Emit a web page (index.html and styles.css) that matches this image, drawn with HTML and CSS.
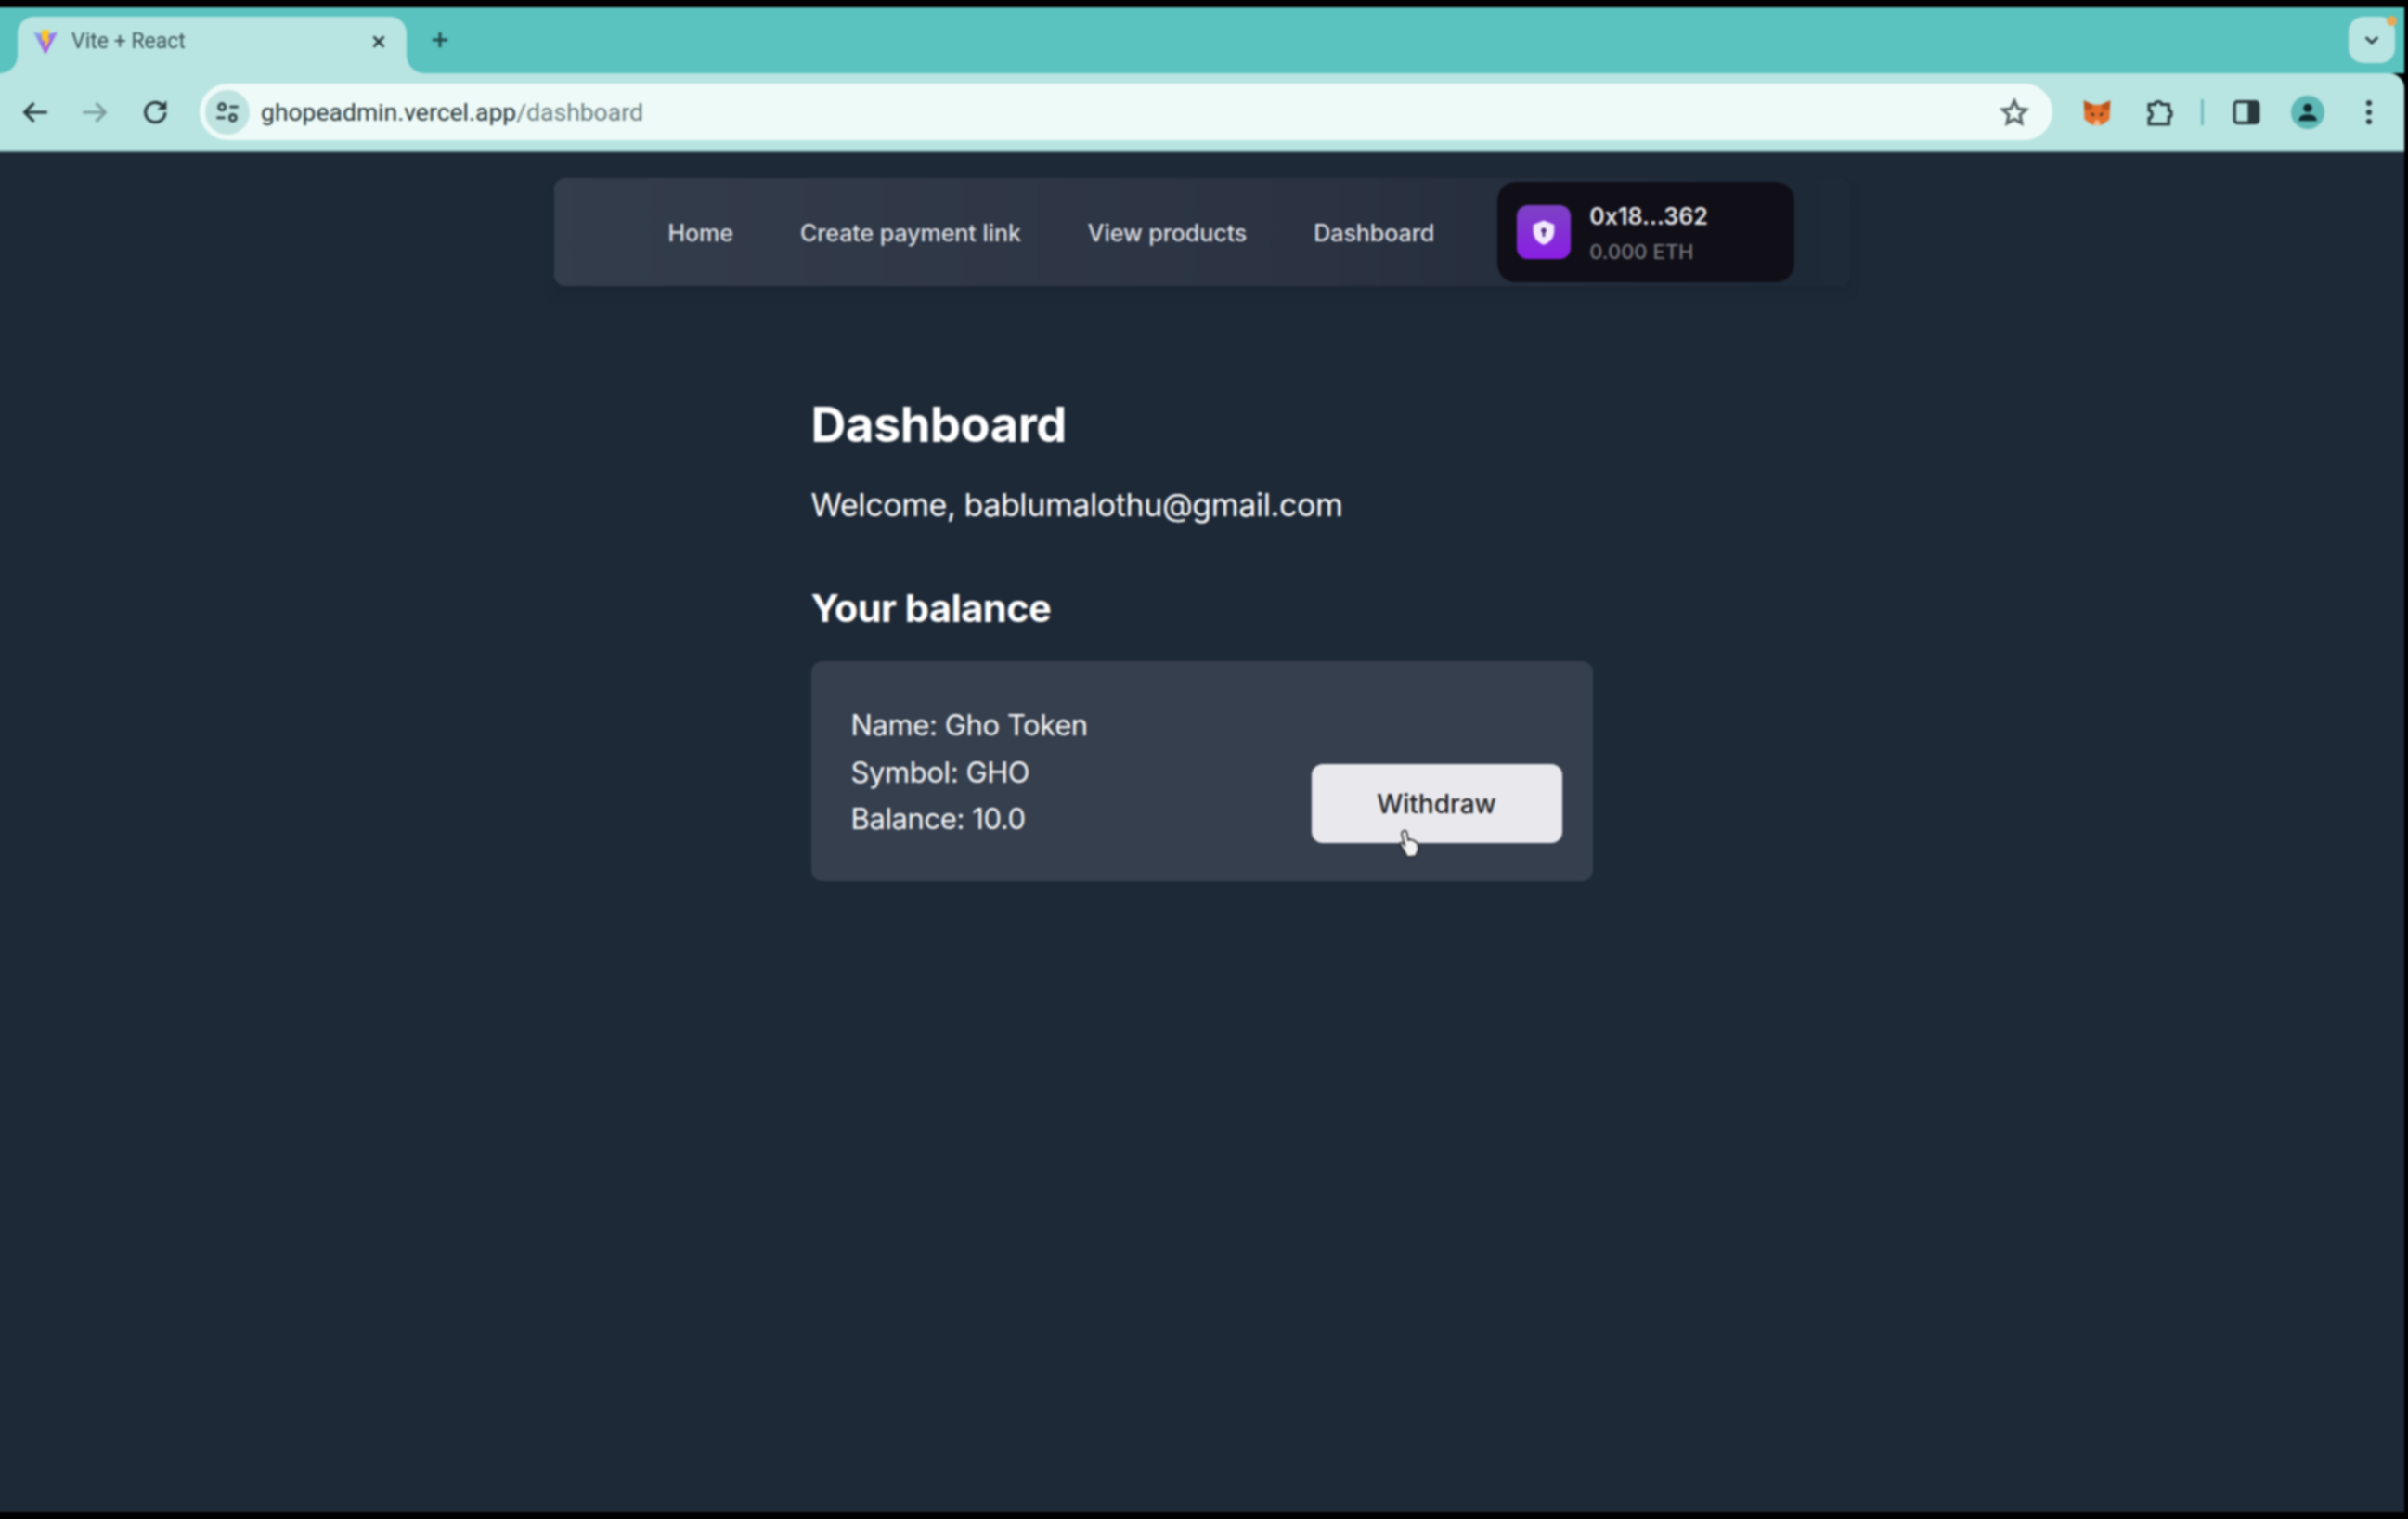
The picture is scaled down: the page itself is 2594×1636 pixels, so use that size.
FILE: index.html
```html
<!DOCTYPE html>
<html lang="en">
<head>
    <meta charset="UTF-8">
    <title>Vite + React</title>
    <link rel="stylesheet" href="styles.css">
</head>
<body>
    <div class="browser">
        <div class="tabstrip">
            <div class="tab">
                <svg class="favicon" viewBox="0 0 32 32">
                    <defs>
                        <linearGradient id="viteA" x1="0" y1="0" x2="0.6" y2="1">
                            <stop offset="0" stop-color="#7fb4e8"/>
                            <stop offset="1" stop-color="#b03be8"/>
                        </linearGradient>
                    </defs>
                    <path d="M1 4 L16 7 L31 4 L16 31 Z" fill="url(#viteA)"/>
                    <path d="M11 2 L21 1 L19 13 L22 12 L15 25 L16 14 L12 15 Z" fill="#ffc726"/>
                </svg>
                <span class="tab-title">Vite + React</span>
                <svg class="tab-close" viewBox="0 0 16 16"><path d="M2.5 2.5 L13.5 13.5 M13.5 2.5 L2.5 13.5"/></svg>
            </div>
            <svg class="new-tab" viewBox="0 0 20 20"><path d="M10 2 V18 M2 10 H18"/></svg>
            <div class="tab-search">
                <svg viewBox="0 0 20 12"><path d="M3 2.5 L10 9 L17 2.5"/></svg>
                <span class="tab-search-dot"></span>
            </div>
        </div>

        <div class="toolbar">
            <svg class="tool" viewBox="0 0 24 24"><path d="M21 12 H4 M11 5 L4 12 L11 19"/></svg>
            <svg class="tool tool-off" viewBox="0 0 24 24"><path d="M3 12 H20 M13 5 L20 12 L13 19"/></svg>
            <svg class="tool tool-reload" viewBox="0 0 24 24"><path d="M19 12 A7.5 7.5 0 1 1 16.8 6.7"/><path class="solid" d="M20 3 V10 H13 Z"/></svg>

            <div class="address">
                <span class="site-info">
                    <svg viewBox="0 0 24 24">
                        <circle cx="7" cy="7" r="3"/><path d="M14 7 H22 M2 17 H10"/><circle cx="17" cy="17" r="3"/>
                    </svg>
                </span>
                <span class="url">ghopeadmin.vercel.app<span class="url-path">/dashboard</span></span>
                <svg class="star" viewBox="0 0 24 24"><path d="M12 2.8 L14.8 9 L21.5 9.7 L16.5 14.2 L17.9 20.9 L12 17.5 L6.1 20.9 L7.5 14.2 L2.5 9.7 L9.2 9 Z"/></svg>
            </div>

            <div class="actions">
                <svg class="ext-fox" viewBox="0 0 40 40">
                    <path d="M1 3 L14 9 H26 L39 3 L38 30 L27 38 H13 L2 30 Z" fill="#e2702c"/>
                    <path d="M1 3 L14 9 L12 17 L2 16 Z M39 3 L26 9 L28 17 L38 16 Z" fill="#b9521d"/>
                    <path d="M10 20 L17 23 L14 26 Z M30 20 L23 23 L26 26 Z" fill="#33261c"/>
                    <path d="M15 35 L20 30 L25 35 L23 39 H17 Z" fill="#f3b78c"/>
                </svg>
                <svg class="tool tool-dark" viewBox="0 0 24 24"><path d="M5 6 H9.5 C9.5 3.2 14.5 3.2 14.5 6 H20 V10.5 C22.6 10.5 22.6 15.5 20 15.5 V21 H5 V16.5 C8 16.5 8 10.5 5 10.5 Z"/></svg>
                <span class="tool-sep"></span>
                <svg class="tool tool-dark" viewBox="0 0 24 24"><rect x="3" y="4" width="18" height="16" rx="2"/><path class="solid" d="M13 4 H21 V20 H13 Z"/></svg>
                <span class="avatar">
                    <svg viewBox="0 0 24 24"><circle cx="12" cy="8" r="4"/><path d="M3.5 20 C4 15 8 14 12 14 C16 14 20 15 20.5 20 Z"/></svg>
                </span>
                <span class="dots"><i></i><i></i><i></i></span>
            </div>
        </div>

        <div class="page">
            <nav class="nav">
                <a href="#">Home</a>
                <a href="#">Create payment link</a>
                <a href="#">View products</a>
                <a href="#">Dashboard</a>
                <div class="wallet">
                    <span class="wallet-icon">
                        <svg viewBox="0 0 24 24">
                            <path d="M12 2 L21 5.5 V11 C21 17 17 21 12 23 C7 21 3 17 3 11 V5.5 Z" fill="#f3e9ff"/>
                            <circle cx="12" cy="10.5" r="2.2" fill="#4a2a7a"/>
                            <rect x="11" y="11" width="2" height="5" fill="#4a2a7a"/>
                        </svg>
                    </span>
                    <div class="wallet-text">
                        <div class="wallet-addr">0x18...362</div>
                        <div class="wallet-bal">0.000 ETH</div>
                    </div>
                </div>
            </nav>

            <main class="content">
                <h1>Dashboard</h1>
                <p class="welcome">Welcome, bablumalothu@gmail.com</p>
                <h2>Your balance</h2>
                <div class="card">
                    <div class="token">
                        <div>Name: Gho Token</div>
                        <div>Symbol: GHO</div>
                        <div>Balance: 10.0</div>
                    </div>
                    <div class="btn-wrap">
                        <button type="button" class="btn">Withdraw</button>
                        <svg class="cursor" viewBox="0 0 24 32">
                            <path d="M6 2 C8 1 9 2 9.5 4 L11 12 L13 11 L15 12 L17 12 L19 14 L21 15 L22 22 L19 29 L10 30 L5 21 L2 16 C2 14 4 14 6 16 L7 17 L4 5 C4 3.5 5 2.5 6 2 Z"/>
                        </svg>
                    </div>
                </div>
            </main>
        </div>
    </div>
</body>
</html>
```

FILE: styles.css
```css
* {
    margin: 0;
    padding: 0;
    box-sizing: border-box;
}
html, body {
    height: 100%;
}
body {
    background: #000;
    padding: 8px 4px 8px 0;
    overflow: hidden;
    font-family: Inter, "Liberation Sans", sans-serif;
}
.browser {
    height: 100%;
    margin-left: -3px;
    display: flex;
    flex-direction: column;
    filter: blur(1px);
}

/* tab strip */
.tabstrip {
    height: 71px;
    flex: none;
    background: #5ac2bf;
    display: flex;
    align-items: flex-start;
    position: relative;
}
.tab {
    width: 419px;
    height: 61px;
    margin: 10px 0 0 22px;
    padding: 0 22px 0 16px;
    background: #b8e4e2;
    border-radius: 18px 18px 0 0;
    display: flex;
    align-items: center;
    gap: 14px;
    position: relative;
}
.tab::before,
.tab::after {
    content: "";
    position: absolute;
    bottom: 0;
    width: 19px;
    height: 19px;
}
.tab::before {
    left: -19px;
    background: radial-gradient(circle at 0 0, transparent 18.5px, #b8e4e2 19px);
}
.tab::after {
    right: -19px;
    background: radial-gradient(circle at 100% 0, transparent 18.5px, #b8e4e2 19px);
}
.favicon {
    width: 28px;
    height: 28px;
    flex: none;
    margin-top: -7px;
}
.tab-title {
    flex: 1;
    font-family: Roboto, sans-serif;
    font-size: 23px;
    color: #3f5557;
    margin-top: -8px;
}
.tab-close {
    width: 16px;
    height: 16px;
    margin-top: -8px;
    fill: none;
    stroke: #28393b;
    stroke-width: 2.6;
}
.new-tab {
    width: 20px;
    height: 20px;
    margin: 25px 0 0 26px;
    fill: none;
    stroke: #1f4a4a;
    stroke-width: 3;
}
.tab-search {
    width: 50px;
    height: 50px;
    margin: 10px 10px 0 auto;
    background: #b8e4e2;
    border-radius: 16px;
    display: flex;
    align-items: center;
    justify-content: center;
    position: relative;
}
.tab-search svg {
    width: 18px;
    height: 11px;
    fill: none;
    stroke: #26393b;
    stroke-width: 3;
}
.tab-search-dot {
    position: absolute;
    top: -1px;
    right: -2px;
    width: 11px;
    height: 11px;
    border-radius: 50%;
    background: #e9a957;
}

/* toolbar */
.toolbar {
    height: 85px;
    flex: none;
    background: #b8e4e2;
    border-radius: 0 16px 0 0;
    border-bottom: 2px solid #7fa5a6;
    padding-left: 21px;
    display: flex;
    align-items: center;
    gap: 24px;
}
.tool {
    width: 40px;
    height: 34px;
    flex: none;
    fill: none;
    stroke: #28393b;
    stroke-width: 2.2;
}
.tool .solid {
    fill: #28393b;
    stroke: none;
}
.tool-off {
    stroke: #7c9c9d;
}
.tool-reload {
    margin: 0 -2px 0 2px;
}
.address {
    width: 1996px;
    height: 61px;
    margin-left: 5px;
    padding: 0 25px 0 6px;
    background: #eefaf8;
    border-radius: 31px;
    display: flex;
    align-items: center;
    flex: none;
}
.site-info {
    width: 48px;
    height: 48px;
    border-radius: 50%;
    background: #bfe3e1;
    display: flex;
    align-items: center;
    justify-content: center;
}
.site-info svg {
    width: 28px;
    height: 28px;
    fill: none;
    stroke: #2b3f41;
    stroke-width: 2.4;
}
.url {
    flex: 1;
    margin-left: 12px;
    font-family: Roboto, sans-serif;
    font-size: 26.5px;
    color: #2b3a3c;
}
.url-path {
    color: #6c7f81;
}
.star {
    width: 32px;
    height: 32px;
    fill: none;
    stroke: #566567;
    stroke-width: 2.4;
}
.actions {
    display: flex;
    align-items: center;
    gap: 26px;
    flex: none;
    margin-left: 4px;
}
.ext-fox {
    width: 32px;
    height: 30px;
    margin: 0 4px;
}
.tool-dark {
    stroke-width: 2.2;
}
.tool-sep {
    width: 3px;
    height: 28px;
    background: #74bcbc;
}
.avatar {
    width: 36px;
    height: 36px;
    margin: 0 2px;
    border-radius: 50%;
    background: #5eb8b6;
    display: flex;
    align-items: center;
    justify-content: center;
}
.avatar svg {
    width: 28px;
    height: 28px;
    fill: #0f2b30;
}
.dots {
    width: 40px;
    display: flex;
    flex-direction: column;
    align-items: center;
    gap: 4px;
}
.dots i {
    width: 6px;
    height: 6px;
    border-radius: 50%;
    background: #2a3b3d;
}

/* page */
.page {
    flex: 1;
    padding-left: 2px;
    background: #1e2937;
    display: flex;
    flex-direction: column;
    align-items: center;
}
.nav {
    width: 1396px;
    height: 116px;
    margin-top: 28px;
    padding: 2px 0 0 123px;
    background: linear-gradient(90deg, #343d4c, #2b3342 60%, #1f2937 90%, #1e2a38);
    border-radius: 12px;
    box-shadow: 0 10px 10px #1c2634;
    display: flex;
    align-items: center;
    gap: 72px;
}
.nav a {
    font-size: 25px;
    font-weight: 500;
    color: #dcdee2;
    text-decoration: none;
    letter-spacing: -0.05px;
}
.wallet {
    width: 320px;
    height: 108px;
    margin: -2px 0 0 -4px;
    padding-left: 21px;
    background: #100f18;
    border-radius: 20px;
    display: flex;
    align-items: center;
    gap: 20px;
}
.wallet-icon {
    width: 58px;
    height: 58px;
    border-radius: 12px;
    background: linear-gradient(#7d42c4, #8a1ee6);
    display: flex;
    align-items: center;
    justify-content: center;
}
.wallet-icon svg {
    width: 30px;
    height: 30px;
}
.wallet-text {
    margin-top: 4px;
}
.wallet-addr {
    font-size: 25px;
    font-weight: 600;
    line-height: 38px;
    color: #e4e4e6;
}
.wallet-bal {
    font-size: 22px;
    font-weight: 500;
    line-height: 38px;
    color: #77777c;
}
.content {
    width: 842px;
    margin-top: 119px;
    color: #fff;
}
h1 {
    font-size: 52.5px;
    font-weight: 700;
    line-height: 60px;
    letter-spacing: -0.5px;
}
.welcome {
    margin-top: 37px;
    font-size: 34px;
    line-height: 40px;
    color: #fff;
    letter-spacing: -0.4px;
}
h2 {
    margin-top: 67px;
    font-size: 41.5px;
    font-weight: 700;
    line-height: 48px;
    letter-spacing: -0.5px;
}
.card {
    margin-top: 33px;
    height: 237px;
    padding: 44px 33px 0 43px;
    background: #363f4e;
    border-radius: 12px;
    display: flex;
    justify-content: space-between;
    align-items: flex-start;
}
.token {
    font-size: 31px;
    line-height: 50.5px;
    color: #f6f7f8;
    letter-spacing: -0.4px;
}
.btn-wrap {
    margin-top: 67px;
    position: relative;
}
.btn {
    display: block;
    width: 270px;
    height: 85px;
    background: #e9e9ed;
    border: 0;
    border-radius: 12px;
    font-family: inherit;
    font-size: 28px;
    font-weight: 500;
    color: #232326;
}
.cursor {
    position: absolute;
    left: 93px;
    top: 70px;
    width: 24px;
    height: 32px;
    fill: #f2f2f2;
    stroke: #222;
    stroke-width: 1.6;
}
```
